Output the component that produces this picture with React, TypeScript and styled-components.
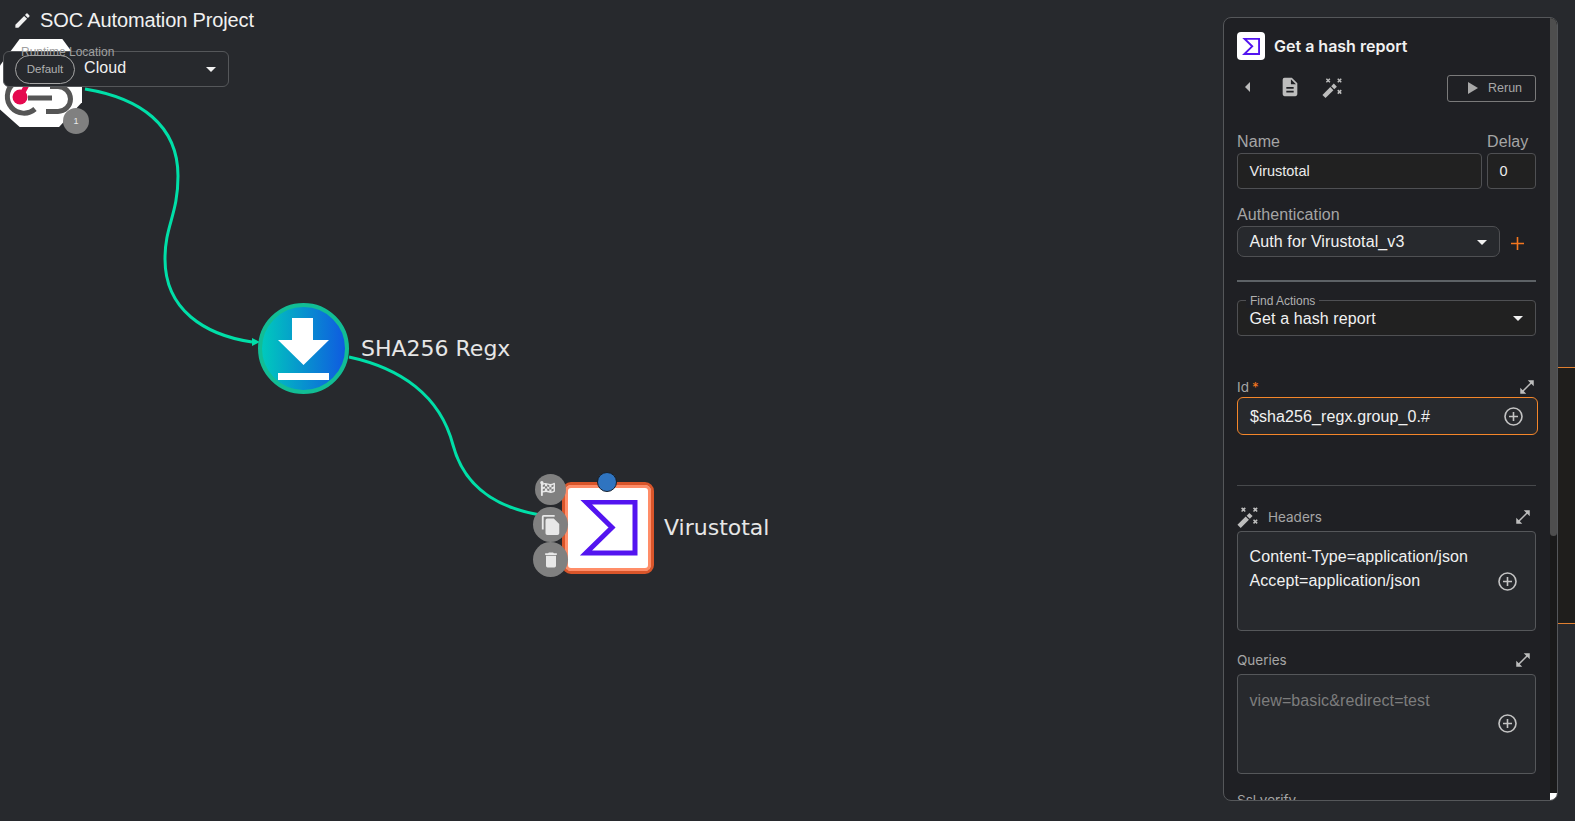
import React from 'react';
import styled, { createGlobalStyle } from 'styled-components';
import { FaFlagCheckered } from 'react-icons/fa';

const GlobalStyle = createGlobalStyle`
	html, body {
		margin: 0;
		height: 100%;
		overflow: hidden;
		background: #27292d;
		font-family: "Liberation Sans", Arial, sans-serif;
	}
`

const Page = styled.div`
	position: relative;
	width: 1575px;
	height: 821px;
	overflow: hidden;
	background: #27292d;
	color: #f1f1f1;
`

const Wires = styled.svg`
	position: absolute;
	left: 0;
	top: 0;
`

const Header = styled.div`
	position: absolute;
	left: 13px;
	top: 9px;
	display: flex;
	align-items: center;
	gap: 8px;
	font-size: 20px;
	letter-spacing: -0.13px;
	line-height: 23px;
`

const Node = styled.div<{ $x: number; $y: number }>`
	position: absolute;
	left: ${p => p.$x}px;
	top: ${p => p.$y}px;
`

const NodeLabel = styled.div<{ $x: number; $y: number; $size?: number }>`
	position: absolute;
	left: ${p => p.$x}px;
	top: ${p => p.$y}px;
	font-family: "DejaVu Sans", sans-serif;
	font-size: ${p => p.$size ?? 22}px;
	line-height: 26px;
	color: #e6e6e6;
	white-space: nowrap;
`

const Octagon = styled.div`
	width: 82px;
	height: 88px;
	background: #fff;
	clip-path: polygon(24% 0, 76% 0, 100% 30%, 100% 72%, 72% 100%, 24% 100%, 0 80%, 0 30%);
`

const CountBadge = styled.div`
	position: absolute;
	left: 63px;
	top: 108px;
	width: 26px;
	height: 26px;
	border-radius: 50%;
	background: #808080;
	color: #e8e8e8;
	font-size: 9px;
	display: flex;
	align-items: center;
	justify-content: center;
`

const RoundNode = styled.div`
	box-sizing: border-box;
	width: 91px;
	height: 91px;
	border: 4px solid #12bd95;
	border-radius: 50%;
	background: linear-gradient(90deg, #00c9bd, #0f5be0);
	display: flex;
	align-items: center;
	justify-content: center;
`

const SquareNode = styled.div`
	box-sizing: border-box;
	width: 92px;
	height: 92px;
	background: #fff;
	border: 3px solid #d9552a;
	border-radius: 9px;
	box-shadow: inset 0 0 0 3px #ff8d68;
	display: flex;
	align-items: center;
	justify-content: center;
`

const StartDot = styled.div`
	position: absolute;
	left: 35px;
	top: -10px;
	width: 18px;
	height: 18px;
	border-radius: 50%;
	background: #2f74c0;
	border: 1px solid #17202c;
`

const NodeAction = styled.div<{ $x: number; $y: number; $size: number }>`
	position: absolute;
	left: ${p => p.$x}px;
	top: ${p => p.$y}px;
	width: ${p => p.$size}px;
	height: ${p => p.$size}px;
	border-radius: 50%;
	background: #808080;
	display: flex;
	align-items: center;
	justify-content: center;
`

const FlagGlyph = styled(FaFlagCheckered)`
	transform: translate(-3px, -1px);
`

const RuntimeBox = styled.div`
	position: absolute;
	left: 3px;
	top: 51px;
	box-sizing: border-box;
	width: 226px;
	height: 36px;
	border: 1px solid #55575a;
	border-radius: 6px;
	background: #27292d;
	display: flex;
	align-items: center;
	padding: 0 12px 0 11px;
`

const RuntimeLabel = styled.div`
	position: absolute;
	left: 17px;
	top: -7px;
	font-size: 12px;
	line-height: 14px;
	color: #a0a0a0;
`

const DefaultChip = styled.div`
	box-sizing: border-box;
	width: 60px;
	height: 29px;
	border: 1px solid #a5a5a5;
	border-radius: 15px;
	font-size: 11.5px;
	color: #b0b0b0;
	display: flex;
	align-items: center;
	justify-content: center;
	margin-right: 9px;
`

const SelectValue = styled.div`
	flex: 1;
	font-size: 16px;
	letter-spacing: 0.1px;
	color: #f1f1f1;
`

const RuntimeValue = styled(SelectValue)`
	margin-top: -3px;
`

const Caret = styled.div`
	width: 0;
	height: 0;
	border-left: 5px solid transparent;
	border-right: 5px solid transparent;
	border-top: 5px solid #f1f1f1;
`

const EdgeStrip = styled.div`
	position: absolute;
	left: 1558px;
	top: 367px;
	width: 17px;
	height: 257px;
	box-sizing: border-box;
	background: #1f1e1c;
	border-top: 1px solid #e07f30;
	border-bottom: 1px solid #e07f30;
`

const Panel = styled.div`
	position: absolute;
	left: 1223px;
	top: 17px;
	box-sizing: border-box;
	width: 335px;
	height: 784px;
	border: 1px solid #55575a;
	border-radius: 8px;
	background: #1f2024;
	overflow: hidden;
`

const Scrollbar = styled.div`
	position: absolute;
	right: 0;
	top: 0;
	bottom: 0;
	width: 7px;
	background: #1a1a1a;

	&::before {
		content: '';
		display: block;
		height: 518px;
		background: #4e4e4e;
		border-radius: 0 4px 4px 4px;
	}
	&::after {
		content: '';
		position: absolute;
		right: 0;
		bottom: 0;
		width: 7px;
		height: 7px;
		background: #fff;
	}
`

const PanelBody = styled.div`
	padding: 13px 0 0 13px;
	width: 299px;
`

const TitleRow = styled.div`
	display: flex;
	align-items: center;
	gap: 9px;
	height: 30px;
	font-family: Inter, sans-serif;
	font-size: 16px;
	font-weight: 600;
	color: #f1f1f1;
`

const TitleIcon = styled.div`
	box-sizing: border-box;
	width: 28px;
	height: 28px;
	background: #fff;
	border-radius: 4px;
	display: flex;
	align-items: center;
	justify-content: center;
`

const ToolRow = styled.div`
	display: flex;
	align-items: center;
	height: 28px;
	margin-top: 12px;
`

const ToolIcon = styled.div<{ $w: number }>`
	width: ${p => p.$w}px;
	display: flex;
	align-items: center;
	justify-content: center;
	color: #bdbdbd;
`

const RerunButton = styled.div`
	box-sizing: border-box;
	margin: 2px 0 0 auto;
	width: 89px;
	height: 27px;
	border: 1px solid #7a7a7a;
	border-radius: 3px;
	padding-left: 20px;
	display: flex;
	align-items: center;
	gap: 10px;
	font-size: 12.5px;
	color: #a8a8a8;
`

const Row = styled.div<{ $gap?: number; $top?: number }>`
	display: flex;
	gap: ${p => p.$gap ?? 5}px;
	margin-top: ${p => p.$top ?? 0}px;
`

const Column = styled.div<{ $w: number }>`
	width: ${p => p.$w}px;
`

const FieldLabel = styled.div<{ $top?: number }>`
	font-size: 16px;
	letter-spacing: 0.1px;
	line-height: 18px;
	color: #a5a5a5;
	margin-top: ${p => p.$top ?? 0}px;
	margin-bottom: 2px;
`

const TextField = styled.div`
	box-sizing: border-box;
	height: 36px;
	border: 1px solid #4f5053;
	border-radius: 4px;
	background: #212121;
	padding: 0 11.5px;
	display: flex;
	align-items: center;
	font-size: 14.5px;
	color: #ececec;
`

const AuthSelect = styled.div`
	box-sizing: border-box;
	width: 263px;
	height: 31px;
	border: 1px solid #4f5053;
	border-radius: 7px;
	background: #27292d;
	padding: 1px 12px 0 11.5px;
	display: flex;
	align-items: center;
	font-size: 16px;
	color: #f1f1f1;
`

const PlusMark = styled.div`
	margin: 10px 0 0 10px;
	color: #f4761f;
	display: flex;
`

const Divider = styled.div<{ $h: number; $top: number; $color: string }>`
	height: ${p => p.$h}px;
	margin-top: ${p => p.$top}px;
	background: ${p => p.$color};
`

const FindBox = styled.div`
	position: relative;
	box-sizing: border-box;
	height: 36px;
	margin-top: 18px;
	border: 1px solid #4f5053;
	border-radius: 4px;
	background: #212121;
	padding: 1px 12px 0 11.5px;
	display: flex;
	align-items: center;
	font-size: 16px;
	color: #f1f1f1;
`

const FindLabel = styled.div`
	position: absolute;
	left: 8px;
	top: -7px;
	padding: 0 4px;
	background: #1f2024;
	font-size: 12px;
	line-height: 14px;
	color: #b0b0b0;
`

const ParamHead = styled.div<{ $top: number; $pad?: number }>`
	display: flex;
	align-items: center;
	height: 20px;
	margin-top: ${p => p.$top}px;
	padding-right: ${p => p.$pad ?? 4}px;
	gap: 9px;
	font-family: Inter, sans-serif;
	font-size: 13.5px;
	color: #a5a5a5;
`

const Required = styled.span`
	color: #f4761f;
	margin-left: 3px;
`

const ExpandIcon = styled.div`
	margin-left: auto;
	display: flex;
	color: #bdbdbd;
`

const IdField = styled.div`
	box-sizing: border-box;
	width: 301px;
	height: 38px;
	border: 1px solid #f4862a;
	border-radius: 6px;
	background: #27292d;
	padding: 0 14px 0 12px;
	display: flex;
	align-items: center;
	justify-content: space-between;
	font-size: 16px;
	letter-spacing: 0.1px;
	color: #f1f1f1;
`

const IdValue = styled.span`
	margin-top: 1px;
`

const AreaField = styled.div<{ $muted?: boolean }>`
	position: relative;
	box-sizing: border-box;
	height: 100px;
	margin-top: 4px;
	border: 1px solid #55575a;
	border-radius: 4px;
	background: #27292d;
	padding: ${p => (p.$muted ? 14 : 13)}px 11.5px 0;
	font-size: 16px;
	letter-spacing: 0.1px;
	line-height: 24px;
	color: ${p => (p.$muted ? '#7d7d7d' : '#f1f1f1')};
`

const AreaPlus = styled.div<{ $top: number }>`
	position: absolute;
	right: 18px;
	top: ${p => p.$top}px;
	display: flex;
	color: #c4c4c4;
`

const CutLabel = styled.div`
	margin-top: 18px;
	font-family: Inter, sans-serif;
	font-size: 13.5px;
	color: #a5a5a5;
`

const PencilIcon = () => (
	<svg width="19" height="19" viewBox="0 0 24 24" fill="#f1f1f1">
		<path d="M3 17.25V21h3.75L17.81 9.94l-3.75-3.75L3 17.25zM20.71 7.04a1 1 0 0 0 0-1.41l-2.34-2.34a1 1 0 0 0-1.41 0l-1.83 1.83 3.75 3.75 1.83-1.83z" />
	</svg>
);

const WandIcon = ({ size }: { size: number }) => (
	<svg width={size} height={size} viewBox="0 0 24 24" fill="#bdbdbd">
		<path d="M0.500 20.500 9.500 11.500 13 15 4 24z" />
		<path d="M10.500 10.500 13.500 7.500 17 11 14 14z" />
		<path d="M5 2l4 4M9 2 5 6M18 2l4 4M22 2l-4 4M18 15l4 4M22 15l-4 4" stroke="#bdbdbd" strokeWidth="1.7" fill="none" />
	</svg>
);

const ExpandArrows = () => (
	<svg width="18" height="18" viewBox="0 0 24 24" fill="#bdbdbd">
		<path d="M21 11V3h-8l3.290 3.290-10 10L3 13v8h8l-3.290-3.290 10-10z" />
	</svg>
);

const CirclePlus = () => (
	<svg width="19" height="19" viewBox="0 0 19 19" fill="none" stroke="#c4c4c4" strokeWidth="1.6">
		<circle cx="9.500" cy="9.500" r="8.500" />
		<path d="M9.500 5v9M5 9.500h9" />
	</svg>
);

const SigmaLogo = ({ width, height, stroke }: { width: number; height: number; stroke: number }) => (
	<svg width={width} height={height} viewBox="0 0 60 56" fill="none">
		<path d="M8 2H57V53H8L34 27.500z" stroke="#5314f0" strokeWidth={stroke} strokeLinejoin="miter" />
	</svg>
);

const WebhookGlyph = () => (
	<svg width="82" height="88" viewBox="0 0 82 88" fill="none">
		<path d="M28 59H52" stroke="#555" strokeWidth="5" />
		<path d="M13 45A15.500 15.500 0 1 0 35 70" stroke="#555" strokeWidth="5" />
		<path d="M50 47.500H58A12.500 12.500 0 0 1 58 72.500H46" stroke="#555" strokeWidth="5" />
		<circle cx="20" cy="58" r="7.500" fill="#e5094f" />
		<path d="M22 55l6-11" stroke="#e5094f" strokeWidth="5" />
	</svg>
);

function App() {
	return (
		<Page>
			<GlobalStyle />
			<Wires width="1200" height="821" viewBox="0 0 1200 821" fill="none">
				<path d="M85 89C140 98 178 125 178 176C178 215 165 225 165 259C165 310 205 335 252 342" stroke="#00dfa8" strokeWidth="3" />
				<path d="M252 338l8 4-8 4z" fill="#00dfa8" />
				<path d="M349 357C400 368 440 395 453 445C465 490 500 508 540 515" stroke="#00dfa8" strokeWidth="3" />
			</Wires>

			<Node $x={0} $y={39}>
				<Octagon>
					<WebhookGlyph />
				</Octagon>
			</Node>
			<NodeLabel $x={92} $y={69} $size={16.5}>Webhook 1</NodeLabel>
			<CountBadge>1</CountBadge>

			<Node $x={258} $y={303}>
				<RoundNode>
					<svg width="51" height="62" viewBox="0 0 51 62" fill="#fff">
						<path d="M14 0h21v22h16L25.500 47 0 22h14z" />
						<rect x="0" y="55" width="51" height="7" />
					</svg>
				</RoundNode>
			</Node>
			<NodeLabel $x={361} $y={336}>SHA256 Regx</NodeLabel>

			<Node $x={562} $y={482}>
				<SquareNode>
					<SigmaLogo width={60} height={56} stroke={5} />
				</SquareNode>
				<StartDot />
				<NodeAction $x={-27} $y={-8} $size={31}>
					<FlagGlyph size={15} color="#e8e8e8" />
				</NodeAction>
				<NodeAction $x={-29} $y={25} $size={35}>
					<svg width="22" height="22" viewBox="0 0 24 24" fill="#e8e8e8">
						<path d="M16 1H4a2 2 0 0 0-2 2v14h2V3h12zm-1 4H8a2 2 0 0 0-2 2v14a2 2 0 0 0 2 2h11a2 2 0 0 0 2-2V11z" />
					</svg>
				</NodeAction>
				<NodeAction $x={-29} $y={60} $size={35}>
					<svg width="20" height="20" viewBox="0 0 24 24" fill="#e8e8e8">
						<path d="M6 19a2 2 0 0 0 2 2h8a2 2 0 0 0 2-2V7H6zM19 4h-3.500l-1-1h-5l-1 1H5v2h14z" />
					</svg>
				</NodeAction>
			</Node>
			<NodeLabel $x={664} $y={515}>Virustotal</NodeLabel>

			<Header>
				<PencilIcon />
				<span>SOC Automation Project</span>
			</Header>

			<RuntimeBox>
				<RuntimeLabel>Runtime Location</RuntimeLabel>
				<DefaultChip>Default</DefaultChip>
				<RuntimeValue>Cloud</RuntimeValue>
				<Caret />
			</RuntimeBox>

			<EdgeStrip />

			<Panel>
				<Scrollbar />
				<PanelBody>
					<TitleRow>
						<TitleIcon>
							<SigmaLogo width={18} height={17} stroke={6.5} />
						</TitleIcon>
						<span>Get a hash report</span>
					</TitleRow>
					<ToolRow>
						<ToolIcon $w={22}>
							<svg width="6" height="10" viewBox="0 0 6 10" fill="#bdbdbd"><path d="M5 0v10L0 5z" /></svg>
						</ToolIcon>
						<ToolIcon $w={61}>
							<svg width="22" height="22" viewBox="0 0 24 24" fill="#bdbdbd">
								<path d="M14 2H6a2 2 0 0 0-2 2v16a2 2 0 0 0 2 2h12a2 2 0 0 0 2-2V8zm2 16H8v-2h8zm0-4H8v-2h8zm-3-5V3.500L18.500 9z" />
							</svg>
						</ToolIcon>
						<ToolIcon $w={24}>
							<WandIcon size={21} />
						</ToolIcon>
						<RerunButton>
							<svg width="10" height="12" viewBox="0 0 10 12" fill="#a8a8a8"><path d="M0 0l10 6-10 6z" /></svg>
							Rerun
						</RerunButton>
					</ToolRow>

					<Row $top={32}>
						<Column $w={245}>
							<FieldLabel>Name</FieldLabel>
							<TextField>Virustotal</TextField>
						</Column>
						<Column $w={49}>
							<FieldLabel>Delay</FieldLabel>
							<TextField>0</TextField>
						</Column>
					</Row>

					<FieldLabel $top={17}>Authentication</FieldLabel>
					<Row $gap={0} $top={2}>
						<AuthSelect>
							<SelectValue>Auth for Virustotal_v3</SelectValue>
							<Caret />
						</AuthSelect>
						<PlusMark>
							<svg width="15" height="15" viewBox="0 0 15 15" stroke="#f4761f" strokeWidth="1.6"><path d="M7.500 1v13M1 7.500h13" /></svg>
						</PlusMark>
					</Row>

					<Divider $h={2} $top={23} $color="#5d6266" />

					<FindBox>
						<FindLabel>Find Actions</FindLabel>
						<SelectValue>Get a hash report</SelectValue>
						<Caret />
					</FindBox>

					<ParamHead $top={41} $pad={0}>
						<span>Id<Required>*</Required></span>
						<ExpandIcon><ExpandArrows /></ExpandIcon>
					</ParamHead>
					<IdField>
						<IdValue>$sha256_regx.group_0.#</IdValue>
						<CirclePlus />
					</IdField>

					<Divider $h={1} $top={50} $color="#47494c" />

					<ParamHead $top={21} $pad={4}>
						<WandIcon size={22} />
						<span>Headers</span>
						<ExpandIcon><ExpandArrows /></ExpandIcon>
					</ParamHead>
					<AreaField>
						Content-Type=application/json<br />
						Accept=application/json
						<AreaPlus $top={40}><CirclePlus /></AreaPlus>
					</AreaField>

					<ParamHead $top={19} $pad={4}>
						<span>Queries</span>
						<ExpandIcon><ExpandArrows /></ExpandIcon>
					</ParamHead>
					<AreaField $muted>
						view=basic&amp;redirect=test
						<AreaPlus $top={39}><CirclePlus /></AreaPlus>
					</AreaField>

					<CutLabel>Ssl verify</CutLabel>
				</PanelBody>
			</Panel>
		</Page>
	);
}

export default App;
